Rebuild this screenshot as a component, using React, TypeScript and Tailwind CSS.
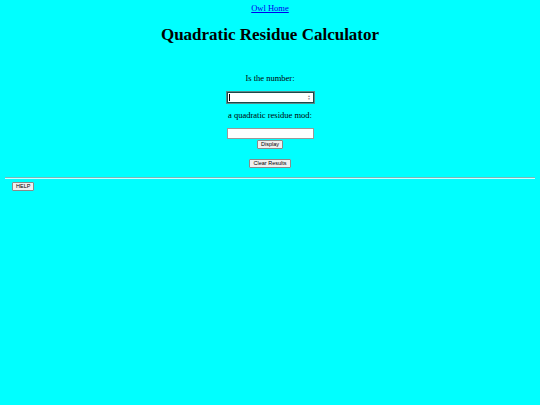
import React from "react";

export default function App() {
  return (
    <div className="min-h-[405px] w-[540px] bg-[#00ffff] text-black" style={{ fontFamily: '"Liberation Serif", serif' }}>
      <div className="flex flex-col items-center pt-[3px]">
        <a href="#" className="text-[8.5px] leading-[10px] text-[#0000ee] underline">Owl Home</a>
        <h1 className="mt-[12px] text-[17px] leading-[20px] font-bold">Quadratic Residue Calculator</h1>
        <p className="mt-[28px] text-[8.5px] leading-[10px]">Is the number:</p>
        <div className="mt-[9px] flex h-[11px] w-[87px] items-center justify-end border border-[#1d4a4a] bg-white pr-[2px] outline outline-1 outline-[#5a8a8a]">
          <div className="mr-auto ml-[1px] h-[7px] w-px bg-black" />
          <div className="flex flex-col items-center leading-none text-[#777]">
            <span className="text-[3px]">▲</span>
            <span className="text-[3px]">▼</span>
          </div>
        </div>
        <p className="mt-[7px] text-[8.5px] leading-[10px]">a quadratic residue mod:</p>
        <div className="mt-[8px] h-[11px] w-[87px] border border-[#9a9a9a] bg-white" />
        <button className="mt-[1px] flex h-[9px] items-center rounded-[1px] border border-[#8a8a8a] bg-[#efefef] px-[3px] text-[5.5px] leading-[7px] text-black" style={{ fontFamily: '"Liberation Sans", sans-serif' }}>Display</button>
        <button className="mt-[10px] flex h-[9px] items-center rounded-[1px] border border-[#8a8a8a] bg-[#efefef] px-[3px] text-[5.5px] leading-[7px] text-black" style={{ fontFamily: '"Liberation Sans", sans-serif' }}>Clear Results</button>
      </div>
      <div className="mx-[5px] mt-[9px] h-[2px] border-t border-t-[#7fb7b7] border-b border-b-[#c8ffff]" />
      <div className="flex pl-[12px] pt-[3px]">
        <button className="flex h-[9px] items-center rounded-[1px] border border-[#8a8a8a] bg-[#efefef] px-[3px] text-[5.5px] leading-[7px] text-black" style={{ fontFamily: '"Liberation Sans", sans-serif' }}>HELP</button>
      </div>
    </div>
  );
}
